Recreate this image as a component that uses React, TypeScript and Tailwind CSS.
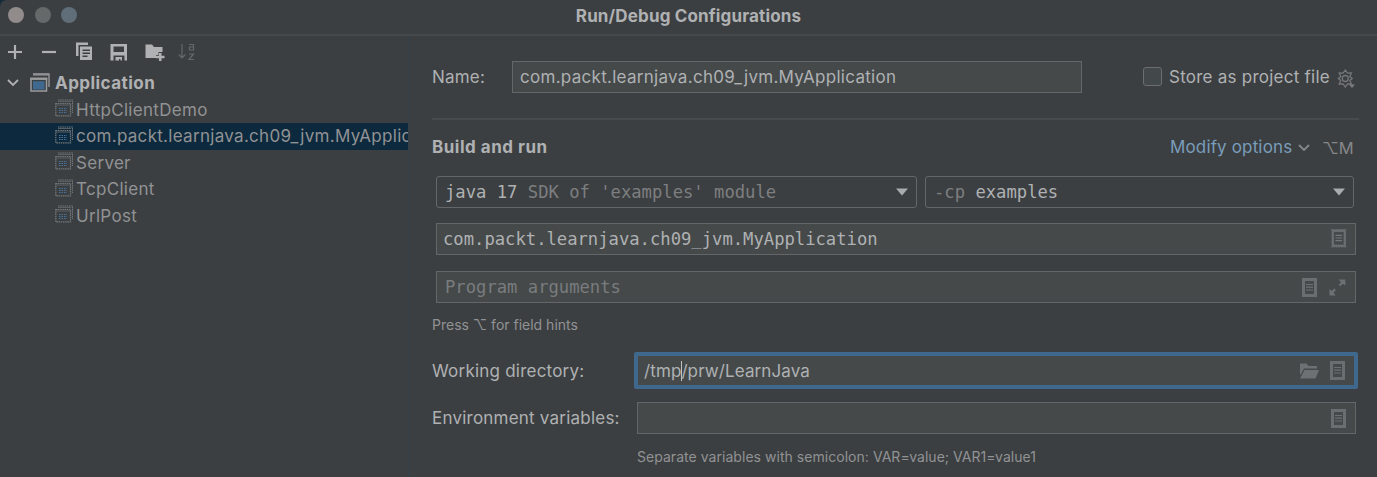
import type { ReactNode } from "react";

const sans = "font-['Inter','Liberation_Sans',sans-serif]";
const mono = "font-['DejaVu_Sans_Mono','Liberation_Mono',monospace]";

function CopyIcon() {
  return (
    <svg width="17" height="19" viewBox="0 0 17 19" fill="#afb1b3" className="shrink-0">
      <path d="M0 .5h12V3H2.500v11H0z" />
      <path fillRule="evenodd" d="M4 4.500h12V18H4zM6.500 7.500V9h7.500V7.500zm0 3V12h7.500v-1.500zm0 3V15h5v-1.500z" />
    </svg>
  );
}

function SaveIcon() {
  return (
    <svg width="18" height="18" viewBox="0 0 18 18" fill="#afb1b3" className="shrink-0">
      <path fillRule="evenodd" d="M.5 1h16.500v16.500h-2.500v-5h-11v5H.5zM3.500 3.500v5.500H14V3.500z" />
      <path d="M5.500 14h6.500v3.500h-1.500v-1.500H9v1.500H5.500z" />
    </svg>
  );
}

function FolderPlusIcon() {
  return (
    <svg width="20" height="18" viewBox="0 0 20 18" fill="#afb1b3" className="shrink-0">
      <path d="M.5 1.500h6.500l2 2.500h8.500V9h-4v3H11v3H.5z" />
      <path d="M14 10h2.500v2.800h3v2.400h-3V18H14v-2.800h-3v-2.400h3z" />
    </svg>
  );
}

function SortIcon() {
  return (
    <svg width="18" height="18" viewBox="0 0 18 18" fill="none" stroke="#65686a" strokeWidth="1.200" className="shrink-0">
      <path d="M4 1v14M.7 11.500 4 15l3.300-3.500M11 1.500h4.500v5.500H11.500V4h4M11 11h4.500L11 16.500h5" />
    </svg>
  );
}

function AppIcon() {
  return (
    <svg width="20" height="19" viewBox="0 0 20 19" className="shrink-0">
      <path d="M3 1h16v13" fill="none" stroke="#8e9193" strokeWidth="1.500" />
      <path d="M3 1.500h16" stroke="#8e9193" strokeWidth="2.200" />
      <rect x="1" y="5.500" width="15.500" height="12.500" fill="#3c3f41" stroke="#9a9c9e" strokeWidth="1.500" />
      <path d="M.3 5.800h17" stroke="#9a9c9e" strokeWidth="2.200" />
      <rect x="3" y="8.200" width="11.500" height="8.300" fill="#40698f" />
    </svg>
  );
}

function ItemIcon() {
  return (
    <svg width="18" height="18" viewBox="0 0 18 18" className="mb-[3px] shrink-0">
      <path d="M3 1h14.500v13" fill="none" stroke="#74787a" strokeWidth="1.200" strokeDasharray="1.500 .7" />
      <path d="M3 2.500h13" stroke="#5c6062" />
      <rect x=".8" y="4.500" width="14.700" height="12.300" fill="none" stroke="#74787a" strokeWidth="1.200" strokeDasharray="1.500 .7" />
      <path d="M1 6h14" stroke="#5c6062" />
      <path d="M4 9.500h8M4 11.500h8M4 13.500h8" stroke="#48749c" strokeWidth="1.200" strokeDasharray="1.500 1" />
    </svg>
  );
}

function ListIcon() {
  return (
    <svg width="16" height="19" viewBox="0 0 16 19" className="shrink-0">
      <rect x="1.500" y="1.500" width="12" height="16" fill="none" stroke="#6b6e70" strokeWidth="3" />
      <path d="M4 6.500h7M4 9.200h7M4 12h7" stroke="#6e7173" strokeWidth="1.200" />
    </svg>
  );
}

function OutlineListIcon() {
  return (
    <svg width="16" height="19" viewBox="0 0 16 19" className="mb-0.5 shrink-0">
      <rect x="1.800" y="1.800" width="12" height="15" fill="none" stroke="#6b6e70" strokeWidth="2.300" />
      <path d="M0 .5h15.500M0 18h15.500" stroke="#6b6e70" strokeDasharray="1.500 1" />
      <path d="M4.500 6.300h6.500M4.500 9h6.500M4.500 11.700h6.500" stroke="#74777a" strokeWidth="1.200" />
    </svg>
  );
}

function ExpandIcon() {
  return (
    <svg width="17" height="17" viewBox="0 0 17 17" fill="#6e7173" className="shrink-0">
      <path d="M9.500 .5h6.800v6L14 4.800l-3 2.400-1.200-1.200L12 3.300zM.5 16.500V10l2.300 2 2.500-2.500 1.600 1.600-2.500 2.600 2.300 2.800z" />
    </svg>
  );
}

function OpenFolderIcon() {
  return (
    <svg width="19" height="16" viewBox="0 0 19 16" fill="#6e7173" className="shrink-0">
      <path d="M0 .5h6.500L8.500 3H17v2.500H4L.8 11.500H0z" />
      <path d="M4.500 7H19l-3.500 8.500H0z" />
    </svg>
  );
}

function GearIcon() {
  return (
    <svg width="18" height="19" viewBox="0 0 18 19" fill="none" stroke="#74777a" strokeWidth="1.300" className="mt-0.5 shrink-0">
      <path d="M8.300 1l2.200 3.200 3.900-.2-1.600 3.600 2.400 1.900-2.400 1.900 1.600 3.600-3.900-.2-2.200 3.200-2.200-3.200-3.900.2 1.600-3.600L1.400 9.500l2.400-1.900L2.200 4l3.900.2z" />
      <circle cx="8.300" cy="9.500" r="3" />
      <path d="M12 15.500h6l-3 3.500z" fill="#7b7e80" stroke="none" />
    </svg>
  );
}

function Chevron({ color }: { color: string }) {
  return (
    <svg width="12" height="8" viewBox="0 0 12 8" fill="none" stroke={color} strokeWidth="1.800" className="shrink-0">
      <path d="M1 1l5 5 5-5" />
    </svg>
  );
}

function Triangle() {
  return (
    <svg width="12" height="8" viewBox="0 0 12 8" fill="#a9acae" className="shrink-0">
      <path d="M0 .5h12L6 7.500z" />
    </svg>
  );
}

function TreeItem({ children, selected = false }: { children: ReactNode; selected?: boolean }) {
  return (
    <div className={`flex h-[26.5px] items-center gap-[3px] overflow-hidden pl-[55px] whitespace-nowrap ${selected ? "bg-[#0d293e]" : ""}`}>
      <ItemIcon />
      <span className="pt-px text-[17px] tracking-[0.3px] text-[#919294]">{children}</span>
    </div>
  );
}

const field = "flex h-8 items-center border border-[#646769] bg-[#45494a]";

export default function App() {
  return (
    <div className="h-[477px] w-[1377px] overflow-hidden bg-[#172b38]">
      <div className={`flex h-full flex-col rounded-tl-[7px] bg-[#3c3f41] text-[17px] text-[#afb1b3] ${sans}`}>
        <header className="grid h-9 shrink-0 grid-cols-[1fr_auto_1fr] items-center border-b-2 border-[#46494b] pb-0.5">
          <div className="flex gap-[10.5px] pb-0.5 pl-2">
            <span className="size-4 rounded-full bg-[#918b8b]" />
            <span className="size-4 rounded-full bg-[#65696a]" />
            <span className="size-4 rounded-full bg-[#5f6e79]" />
          </div>
          <h1 className="pb-px text-[17px] leading-5 font-bold tracking-[0.15px]">Run/Debug Configurations</h1>
        </header>
        <div className="flex min-h-0 flex-1">
          <aside className="flex w-[409px] shrink-0 flex-col border-r border-[#33424d]">
            <div className="flex h-[33px] shrink-0 items-center pb-0.5 pl-2">
              <svg width="14" height="14" viewBox="0 0 14 14" stroke="#afb1b3" strokeWidth="2.200"><path d="M7 0v14M0 7h14" /></svg>
              <svg width="14" height="14" viewBox="0 0 14 14" stroke="#afb1b3" strokeWidth="2.200" className="ml-5"><path d="M0 7h14" /></svg>
              <div className="ml-5 flex items-center gap-[17px]">
                <CopyIcon />
                <SaveIcon />
                <FolderPlusIcon />
                <span className="-ml-1"><SortIcon /></span>
              </div>
            </div>
            <div className="flex h-[27.5px] shrink-0 items-center pl-[7px]">
              <Chevron color="#afb1b3" />
              <div className="ml-[11px] flex items-center gap-[5px]">
                <AppIcon />
                <span className="pt-0.5 text-[17px] font-bold tracking-[0.45px]">Application</span>
              </div>
            </div>
            <TreeItem>HttpClientDemo</TreeItem>
            <TreeItem selected>com.packt.learnjava.ch09_jvm.MyApplication</TreeItem>
            <TreeItem>Server</TreeItem>
            <TreeItem>TcpClient</TreeItem>
            <TreeItem>UrlPost</TreeItem>
          </aside>
          <main className="flex min-w-0 flex-1 flex-col pt-[25px] pl-[23px]">
            <div className="flex h-8 items-center">
              <label className="w-20 pt-0.5 tracking-[0.2px]">Name:</label>
              <div className={`${field} w-[570px] pl-[7px]`}>
                <span className="pt-0.5 tracking-[0.29px]">com.packt.learnjava.ch09_jvm.MyApplication</span>
              </div>
              <span className="mb-0.5 ml-[61px] size-[19px] rounded-[3px] border border-[#6b6e70] bg-[#43494a]" />
              <span className="ml-[7px] w-[168px] pt-px tracking-[0.24px] whitespace-nowrap">Store as project file</span>
              <GearIcon />
            </div>
            <div className="mt-[25px] h-0.5 w-[927px] shrink-0 bg-[#484b4d]" />
            <div className="mt-4 flex h-6 w-[921px] items-center">
              <h2 className="font-bold tracking-[0.5px]">Build and run</h2>
              <div className="ml-auto flex items-center">
                <span className="w-[128px] tracking-[0.15px] whitespace-nowrap text-[#7a9dbb]">Modify options</span>
                <Chevron color="#85888a" />
                <span className="ml-3 w-[31px] text-[16.5px] whitespace-nowrap text-[#858789]">⌥M</span>
              </div>
            </div>
            <div className={`mt-4 ml-1 flex gap-2 ${mono} text-[17.2px]`}>
              <div className="flex h-8 w-[481px] items-center rounded-[3px] border border-[#646769] pr-2 pl-2">
                <span className="pt-0.5 whitespace-pre">java 17 <span className="text-[#7c7e80]">SDK of 'examples' module</span></span>
                <span className="ml-auto"><Triangle /></span>
              </div>
              <div className="flex h-8 w-[429px] items-center rounded-[3px] border border-[#646769] pr-2 pl-2">
                <span className="pt-0.5 whitespace-pre"><span className="text-[#7c7e80]">-cp </span>examples</span>
                <span className="ml-auto"><Triangle /></span>
              </div>
            </div>
            <div className={`${field} ${mono} mt-[15px] ml-1 w-[920px] pr-2 pl-1.5 text-[17.2px]`}>
              <span className="pt-0.5">com.packt.learnjava.ch09_jvm.MyApplication</span>
              <span className="ml-auto"><OutlineListIcon /></span>
            </div>
            <div className={`${field} ${mono} mt-4 ml-1 w-[920px] pr-[9px] pl-2 text-[17.2px] text-[#797c7e]`}>
              <span className="pt-0.5">Program arguments</span>
              <span className="ml-auto flex items-center gap-[11px]"><ListIcon /><ExpandIcon /></span>
            </div>
            <p className="mt-3 h-5 text-[14px] leading-5 text-[#919294]">Press ⌥ for field hints</p>
            <div className="mt-[17px] flex items-center">
              <label className="w-[202px] pt-0.5 tracking-[0.22px]">Working directory:</label>
              <div className="flex h-[37px] w-[724px] items-center rounded-[2px] border-4 border-[#40688c] bg-[#45494a] pr-2 pl-1.5">
                <span className="pt-0.5 tracking-[0.1px]">/tmp</span>
                <span className="-mr-px h-5 w-px bg-[#c0c1c2]" />
                <span className="pt-0.5 tracking-[0.1px]">/prw/LearnJava</span>
                <span className="ml-auto flex items-center gap-[11px]"><OpenFolderIcon /><ListIcon /></span>
              </div>
            </div>
            <div className="mt-[13px] flex items-center">
              <label className="w-[205px] pt-0.5 tracking-[0.22px] whitespace-nowrap">Environment variables:</label>
              <div className={`${field} w-[719px] justify-end pr-2`}><ListIcon /></div>
            </div>
            <p className="mt-[13px] ml-[205px] text-[14px] leading-5 tracking-[0.04px] text-[#919294]">Separate variables with semicolon: VAR=value; VAR1=value1</p>
          </main>
        </div>
      </div>
    </div>
  );
}
